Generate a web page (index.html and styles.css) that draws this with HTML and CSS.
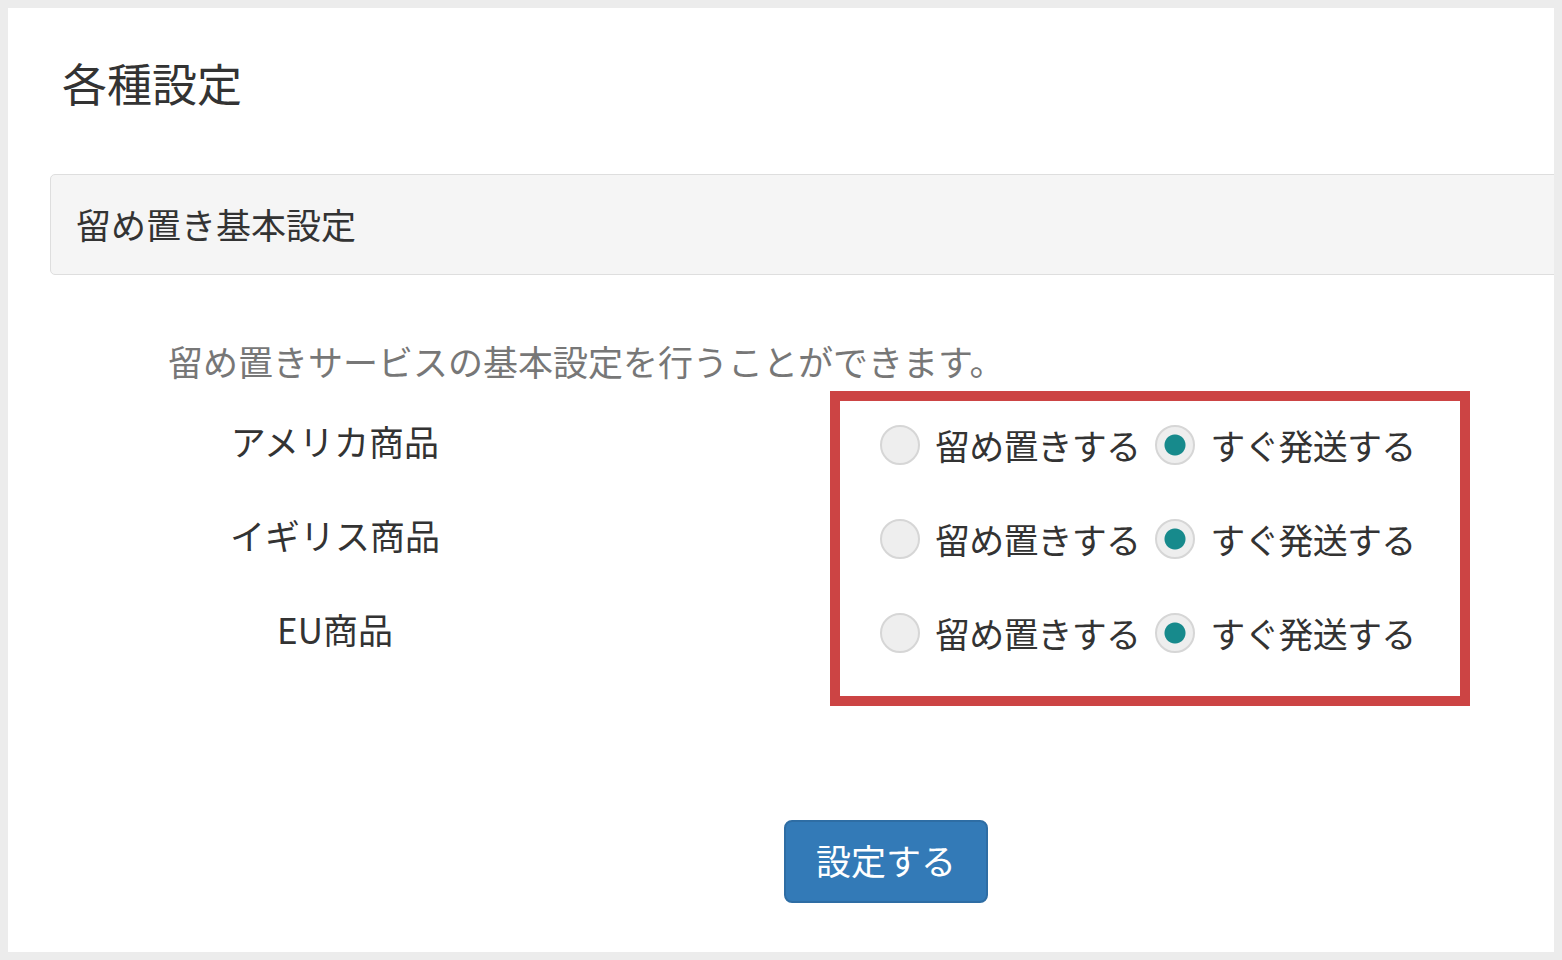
FILE: index.html
```html
<!DOCTYPE html>
<html lang="ja">
<head>
<meta charset="utf-8">
<title>各種設定</title>
<link rel="stylesheet" href="styles.css">
</head>
<body>
<div class="page">
  <h1 class="title">各種設定</h1>
  <div class="panel-heading">留め置き基本設定</div>
  <p class="desc">留め置きサービスの基本設定を行うことができます。</p>
  <form class="form">
    <div class="labels">
      <div class="label-row">アメリカ商品</div>
      <div class="label-row">イギリス商品</div>
      <div class="label-row">EU商品</div>
    </div>
    <div class="options">
      <div class="opt-row">
        <label class="opt"><input type="radio" name="us" class="radio"><span>留め置きする</span></label>
        <label class="opt"><input type="radio" name="us" class="radio" checked><span>すぐ発送する</span></label>
      </div>
      <div class="opt-row">
        <label class="opt"><input type="radio" name="uk" class="radio"><span>留め置きする</span></label>
        <label class="opt"><input type="radio" name="uk" class="radio" checked><span>すぐ発送する</span></label>
      </div>
      <div class="opt-row">
        <label class="opt"><input type="radio" name="eu" class="radio"><span>留め置きする</span></label>
        <label class="opt"><input type="radio" name="eu" class="radio" checked><span>すぐ発送する</span></label>
      </div>
    </div>
  </form>
  <div class="actions">
    <button type="button" class="btn">設定する</button>
  </div>
</div>
</body>
</html>
```

FILE: styles.css
```css
* { box-sizing: border-box; }
html, body { margin: 0; padding: 0; }
body {
  background: #ececec;
  padding: 8px;
  font-family: "Noto Sans CJK JP", "Noto Sans", sans-serif;
  color: #333;
}
.page {
  background: #fff;
  height: 944px;
  overflow: hidden;
  padding: 45px 0 0 42px;
}
.title {
  margin: 0 0 61px 12px;
  font-size: 45px;
  font-weight: normal;
  line-height: 60px;
  color: #333;
}
.panel-heading {
  height: 101px;
  margin-right: -20px;
  background: #f5f5f5;
  border: 1px solid #dedede;
  border-radius: 5px;
  padding-left: 25px;
  font-size: 35px;
  line-height: 97px;
  color: #333;
}
.desc {
  margin: 61px 0 0 118px;
  font-size: 35px;
  line-height: 50px;
  color: #777;
}
.form {
  display: flex;
  margin-top: 5px;
  font-size: 35px;
}
.labels {
  width: 570px;
  padding-top: 10px;
  margin-right: 210px;
  text-align: center;
}
.label-row {
  height: 94px;
  line-height: 80px;
  color: #333;
}
.options {
  width: 640px;
  border: 10px solid #cc4444;
  padding: 0 0 13px 40px;
}
.opt-row {
  height: 94px;
  padding-bottom: 6px;
  display: flex;
  align-items: center;
  gap: 15px;
}
.opt {
  display: flex;
  align-items: center;
  gap: 15px;
  line-height: 50px;
  letter-spacing: -0.8px;
  color: #333;
}
.radio {
  appearance: none;
  -webkit-appearance: none;
  margin: 0;
  width: 40px;
  height: 40px;
  border-radius: 50%;
  border: 2px solid #d6d6d6;
  background: #eeeeee;
  flex: none;
}
.radio:checked {
  background: radial-gradient(circle, #178a8c 0 10px, #eeeeee 11px);
}
.actions {
  margin: 114px 0 0 734px;
}
.btn {
  width: 204px;
  height: 83px;
  background: #337ab7;
  border: 2px solid #2e6da4;
  border-radius: 8px;
  color: #fff;
  font-family: "Noto Sans CJK JP", "Noto Sans", sans-serif;
  font-size: 35px;
  line-height: 1;
  padding: 0 0 4px 0;
}
```
